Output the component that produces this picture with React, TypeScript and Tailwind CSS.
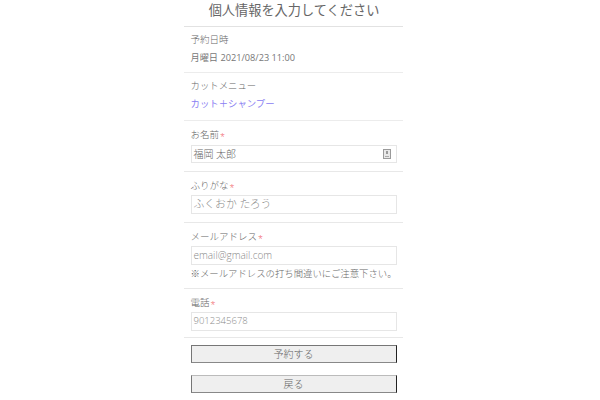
import React from 'react';

const font = { fontFamily: '"Open Sans", "Noto Sans CJK JP", sans-serif' };

const Required = () => <span className="inline-block translate-y-[2px] text-[9px] leading-none text-[#f0505c] ml-px">*</span>;

const Field = ({ label, value, placeholder, icon, note, textClass }: { label: string; value?: string; placeholder?: string; icon?: boolean; note?: string; textClass: string }) => (
  <div className="border-b border-[#e8e8e8] pl-[7px] pr-[6px]">
    <div className="text-[9.5px] leading-[14px] text-[#666] font-light">
      {label}
      <Required />
    </div>
    <div className="mt-[2px] h-[19px] border border-[#e6e6e6] flex items-center justify-between pl-[2px] pr-[3px]">
      <span className={`font-light ${textClass} ${value ? 'text-[#666]' : 'text-[#8a8a8a]'}`}>{value || placeholder}</span>
      {icon && (
        <svg width="8" height="10" viewBox="0 0 8 10" className="mr-[2px]">
          <rect x="0.5" y="0.5" width="7" height="9" fill="#e8e8e8" stroke="#9a9a9a" />
          <rect x="3" y="2" width="2" height="3" fill="#999" />
          <rect x="2" y="7" width="4" height="1" fill="#aaa" />
        </svg>
      )}
    </div>
    {note && <div className="mt-[2px] text-[9.4px] leading-[14px] whitespace-nowrap text-[#666] font-light">{note}</div>}
  </div>
);

export default function App() {
  return (
    <div className="w-[600px] h-[400px] overflow-hidden bg-white flex justify-center" style={font}>
      <div className="w-[219px] ml-[-14px] shrink-0">
        <h1 className="h-[27px] border-b border-[#e2e2e2] pl-[2px] text-center text-[13.2px] leading-[21px] text-[#666] font-normal">個人情報を入力してください</h1>

        <div className="h-[46px] border-b border-[#ececec] pl-[7px] pt-[6px]">
          <div className="text-[9.5px] leading-[14px] text-[#666] font-light">予約日時</div>
          <div className="mt-[4px] text-[9.2px] leading-[14px] text-[#777]">月曜日 2021/08/23 11:00</div>
        </div>

        <div className="h-[48px] border-b border-[#ececec] pl-[7px] pt-[6px]">
          <div className="text-[9.4px] leading-[14px] text-[#666] font-light">カットメニュー</div>
          <div className="mt-[4px] text-[9.4px] leading-[14px] text-[#8a80f2]">カット＋シャンプー</div>
        </div>

        <div className="pt-[7px] h-[51px] flex flex-col [&>div]:h-[44px] [&>div>div:nth-child(2)]:mt-[3px] [&>div>div:nth-child(2)]:h-[18px]">
          <Field label="お名前" value="福岡 太郎" icon textClass="text-[10px]" />
        </div>
        <div className="pt-[7px] h-[51px] flex flex-col [&>div]:h-[44px]">
          <Field label="ふりがな" placeholder="ふくおか たろう" textClass="text-[10.8px]" />
        </div>
        <div className="pt-[7px] h-[66px] flex flex-col [&>div]:h-[59px]">
          <Field label="メールアドレス" placeholder="email@gmail.com" note="※メールアドレスの打ち間違いにご注意下さい。" textClass="text-[10px]" />
        </div>
        <div className="pt-[7px] h-[49px] flex flex-col [&>div]:h-[42px]">
          <Field label="電話" placeholder="9012345678" textClass="text-[9.5px]" />
        </div>

        <div className="pl-[7px] pr-[6px] pt-[7px] flex flex-col gap-[12px]">
          <button className="h-[18px] border border-t-[#767676] border-l-[#767676] border-r-[#222] border-b-[#888] bg-[#efefef] text-[10px] leading-none text-[#666] font-light">予約する</button>
          <button className="h-[18px] border border-t-[#bbb] border-l-[#767676] border-r-[#222] border-b-[#888] bg-[#efefef] text-[10px] leading-none text-[#666] font-light">戻る</button>
        </div>
      </div>
    </div>
  );
}
